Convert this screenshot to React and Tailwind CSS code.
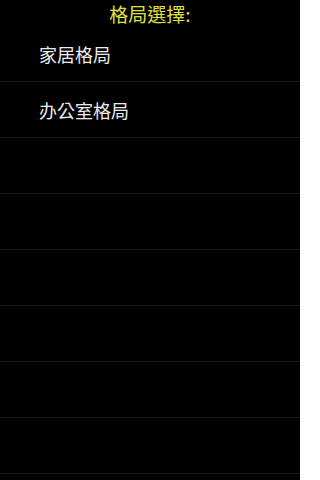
const rows = ["家居格局", "办公室格局", "", "", "", "", "", ""]

const App = () => {
  return (
    <div
      className="w-[300px] h-[480px] bg-black overflow-hidden"
      style={{ fontFamily: '"Noto Sans CJK TC", "Noto Sans CJK SC", sans-serif' }}
    >
      <div className="h-[26px] flex items-center justify-center text-[19px] leading-none text-[#e0e03e]">
        格局選擇:
      </div>
      {rows.map((label, i) => (
        <div
          key={i}
          className="h-[56px] flex items-center pl-[39px] border-b border-[#1c1c1c] text-[18px] leading-none text-[#ececec]"
        >
          {label}
        </div>
      ))}
    </div>
  )
}

export default App
